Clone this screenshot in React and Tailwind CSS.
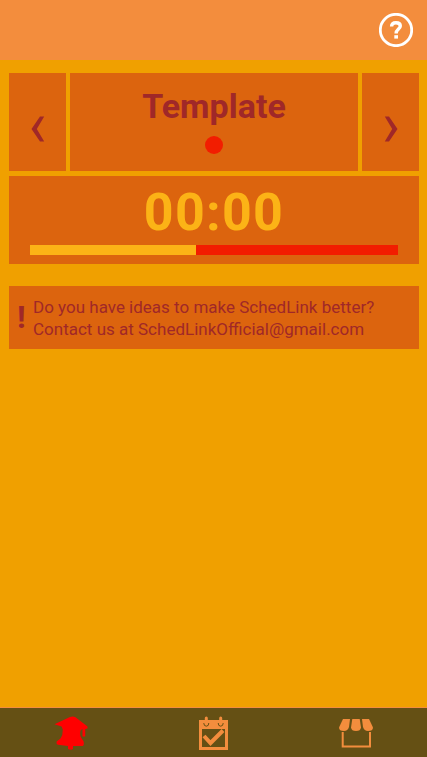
import React from "react";

function Chevron({ flipped }) {
  return (
    <svg viewBox="0 0 14 26" aria-hidden="true" className={`h-[26px] w-[14px] ${flipped ? "rotate-180" : ""}`}>
      <path d="M9 0.5 H13.2 L5.8 13 L13.2 25.5 H9 L0.5 13 Z" fill="currentColor" />
    </svg>
  );
}

function HelpIcon() {
  return (
    <svg viewBox="0 0 34 34" aria-hidden="true" className="size-[34px]" fill="none" stroke="white">
      <circle cx="17" cy="17" r="15.7" strokeWidth="2.8" />
      <path d="M12.6 13.6 C12.6 10.8 14.4 9.7 17 9.7 C19.7 9.7 21.3 11 21.3 13 C21.3 15.9 17.1 16.2 17.1 20.4" strokeWidth="3.4" />
      <path d="M15.3 22.2 h3.7 v3.4 h-3.7 Z" fill="white" stroke="none" />
    </svg>
  );
}

function SchoolBellIcon() {
  return (
    <svg viewBox="0 0 36 36" aria-hidden="true" className="size-9" fill="red">
      <path d="M1.5 9.2 L17 2 Q20 0.8 22.5 2.3 L34.5 11.5 V13.5 L32.2 14 V21.5 H29.5 V13.8 L27.5 15.5 C26.5 20 27.5 22.5 30.5 26 Q31.5 30.5 29.5 31 H20 V34 Q17.5 35.5 15 34 V31 L5 29.8 Q3 29 3.6 26.5 L7.5 23.5 Q10 20 9.8 14.5 L8.5 11.5 Z" />
    </svg>
  );
}

function CalendarIcon() {
  return (
    <svg viewBox="0 0 32 36" aria-hidden="true" className="h-9 w-8" fill="none">
      <path d="M2 5 H31 V35 H2 Z M5 14 V32 H28 V14 Z" fill="#f38d3d" fillRule="evenodd" />
      <path d="M6.8 8 Q6.8 11.2 9.3 11.2 Q11.8 11.2 11.8 8 M21.2 8 Q21.2 11.2 23.7 11.2 Q26.2 11.2 26.2 8" stroke="#655014" strokeWidth="1" />
      <path d="M9.3 3 V8.5 M23.7 3 V8.5" stroke="#f38d3d" strokeWidth="3" strokeLinecap="round" />
      <path d="M7 21 L13.5 28 L26 15.5" stroke="#f38d3d" strokeWidth="4" />
    </svg>
  );
}

function ShopIcon() {
  return (
    <svg viewBox="0 0 36 32" aria-hidden="true" className="h-8 w-9" fill="#f38d3d">
      <path d="M5 2 H12 L11 10 Q9.8 14 6 14 Q1 14 1 10.5 Z" />
      <path d="M14.3 2 H21.7 L23 10.5 Q22.5 14 18 14 Q13.5 14 13 10.5 Z" />
      <path d="M24 2 H31 L35 10.5 Q35 14 30 14 Q26.2 14 25 10 Z" />
      <path d="M4.7 15 V29.5 H32 V15" fill="none" stroke="#f38d3d" strokeWidth="2" />
    </svg>
  );
}

const arrowClass = "flex w-[57px] shrink-0 items-center justify-center bg-[#dc640e] pt-3.5";

export default function App() {
  return (
    <div className="flex min-h-screen flex-col bg-[#f0a000] font-['Roboto',sans-serif] text-[#a02828]">
      <header className="flex h-[60px] items-center justify-end bg-[#f38d3d] pr-3.5">
        <button type="button" aria-label="Help"><HelpIcon /></button>
      </header>

      <main className="flex grow flex-col px-2 pt-[13px]">
        <section className="mb-[5px] flex gap-1 pl-px">
          <button type="button" aria-label="Previous schedule" className={arrowClass}><Chevron /></button>
          <div className="flex h-[98px] grow flex-col items-center bg-[#dc640e] pt-[13px]">
            <h1 className="text-[34px] leading-10 font-bold">Template</h1>
            <span className="mt-2.5 size-[18px] rounded-full bg-[#f21d00]" />
          </div>
          <button type="button" aria-label="Next schedule" className={arrowClass}><Chevron flipped /></button>
        </section>

        <section className="ml-px flex h-[88px] flex-col bg-[#dc640e] px-[21px] pt-[7px]">
          <div className="text-center text-[52px] leading-[60px] font-bold tracking-wide text-[#fcb316]">00:00</div>
          <div className="mt-0.5 flex h-2.5 bg-[#f21d00]">
            <div className="w-[45%] bg-[#fcb316]" />
          </div>
        </section>

        <section className="mt-[22px] ml-px flex h-[63px] items-center bg-[#dc640e] pl-2">
          <span className="w-4 pb-0.5 text-[32px] leading-9 font-bold">!</span>
          <p className="text-[17px] leading-[22px]">
            Do you have ideas to make SchedLink better?<br />
            Contact us at SchedLinkOfficial@gmail.com
          </p>
        </section>
      </main>

      <nav className="grid h-[50px] grid-cols-3 border-t border-[#f38d3d] bg-[#655014]">
        <button type="button" aria-label="Bell schedule" className="flex items-center justify-center"><SchoolBellIcon /></button>
        <button type="button" aria-label="Calendar" className="flex items-center justify-center"><CalendarIcon /></button>
        <button type="button" aria-label="Shop" className="flex items-center justify-center"><ShopIcon /></button>
      </nav>
    </div>
  );
}
